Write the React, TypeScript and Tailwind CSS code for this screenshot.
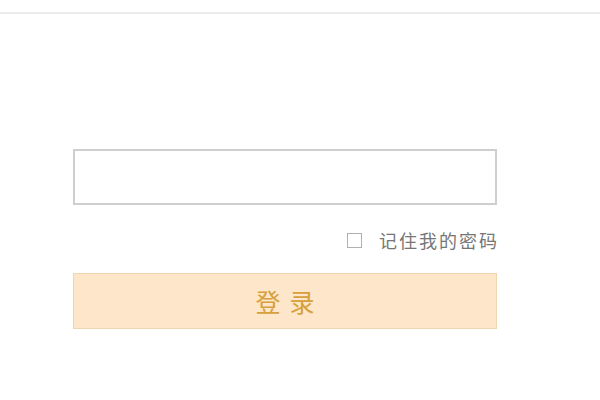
import React from 'react';

export default function App() {
  const font = { fontFamily: '"Noto Sans CJK SC", "Noto Sans", sans-serif' };

  return (
    <div className="w-[600px] h-[400px] bg-white overflow-hidden" style={font}>
      {/* top divider */}
      <div className="h-3" />
      <div className="h-[2px] bg-[#ebebeb]" />

      <div className="pt-[135px] pl-[73px] w-[497px]">
        {/* password field */}
        <input
          type="password"
          className="block w-[424px] h-[56px] border-2 border-[#cfcfcf] bg-white outline-none px-3"
        />

        {/* remember me */}
        <div className="mt-[23px] flex items-center justify-end h-[24px]">
          <div className="w-[15px] h-[15px] shrink-0 border-[1.5px] border-[#b0b0b0] bg-white" />
          <span className="ml-[17px] text-[18px] leading-none tracking-[2px] text-[#767676] mr-[-2px]">
            记住我的密码
          </span>
        </div>

        {/* login button */}
        <button className="mt-[21px] w-[424px] h-[56px] bg-[#fde6c9] border border-[#f0d6ae] flex items-center justify-center gap-[9px] text-[25px] leading-none text-[#d6a03a]">
          <span>登</span>
          <span>录</span>
        </button>
      </div>
    </div>
  );
}
